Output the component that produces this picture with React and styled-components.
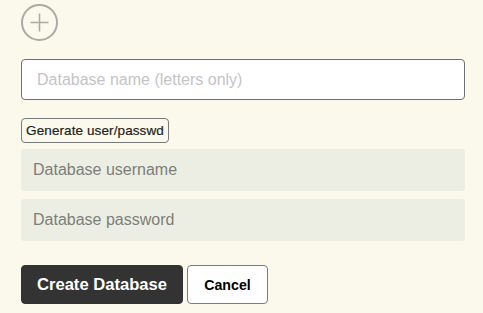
import styled, { createGlobalStyle } from "styled-components";

const GlobalStyle = createGlobalStyle`
  html, body {
    margin: 0;
    padding: 0;
    background: #fbf9ec;
  }
  body {
    font-family: "Liberation Sans", Arial, sans-serif;
  }
`;

const Page = styled.div`
  width: 444px;
  padding: 4px 0 0 21px;
  display: flex;
  flex-direction: column;
`;

const AddButton = styled.button`
  width: 37px;
  height: 37px;
  padding: 0;
  border: none;
  background: none;
  display: flex;
  cursor: pointer;
`;

const NameInput = styled.input`
  box-sizing: border-box;
  height: 41px;
  margin-top: 18px;
  padding: 0 15px;
  border: 1px solid #6d7071;
  border-radius: 4px;
  background: #fff;
  font-family: inherit;
  font-size: 16px;
  outline: none;
  &::placeholder {
    color: #c3c4c6;
  }
`;

const SmallButton = styled.button`
  align-self: flex-start;
  box-sizing: border-box;
  width: 148px;
  height: 25px;
  margin-top: 18px;
  padding: 0;
  border: 1px solid #77797a;
  border-radius: 4px;
  background: transparent;
  color: #222;
  font-family: inherit;
  font-size: 13.5px;
  letter-spacing: 0.1px;
  -webkit-text-stroke: 0.2px #222;
`;

const FilledInput = styled.input`
  box-sizing: border-box;
  height: 42px;
  margin-top: ${(p) => p.$gap}px;
  padding: 0 12px;
  border: none;
  border-radius: 3px;
  background: #eceee3;
  font-family: inherit;
  font-size: 16px;
  outline: none;
  &::placeholder {
    color: #7c7e7a;
  }
`;

const Actions = styled.div`
  display: flex;
  gap: 4px;
  margin-top: 24px;
`;

const Button = styled.button`
  box-sizing: border-box;
  height: 39px;
  padding: 0;
  border-radius: 4px;
  font-family: inherit;
  font-weight: bold;
  cursor: pointer;
  border: 1px solid ${(p) => (p.$primary ? "#333" : "#7a7c7d")};
  background: ${(p) => (p.$primary ? "#333" : "#fff")};
  color: ${(p) => (p.$primary ? "#fff" : "#000")};
  font-size: ${(p) => (p.$primary ? "16.6px" : "14.2px")};
  width: ${(p) => (p.$primary ? "162px" : "81px")};
`;

const PlusIcon = () => (
  <svg width="37" height="37" viewBox="0 0 37 37">
    <circle cx="18.5" cy="18.5" r="17.5" fill="none" stroke="#a9aca5" strokeWidth="2" />
    <path d="M18.5 9.5v18M9.5 18.5h18" stroke="#a9aca5" strokeWidth="1.6" />
  </svg>
);

export default function App() {
  return (
    <>
      <GlobalStyle />
      <Page>
        <AddButton>
          <PlusIcon />
        </AddButton>
        <NameInput placeholder="Database name (letters only)" />
        <SmallButton>Generate user/passwd</SmallButton>
        <FilledInput $gap={6} placeholder="Database username" />
        <FilledInput $gap={8} placeholder="Database password" />
        <Actions>
          <Button $primary>Create Database</Button>
          <Button>Cancel</Button>
        </Actions>
      </Page>
    </>
  );
}
